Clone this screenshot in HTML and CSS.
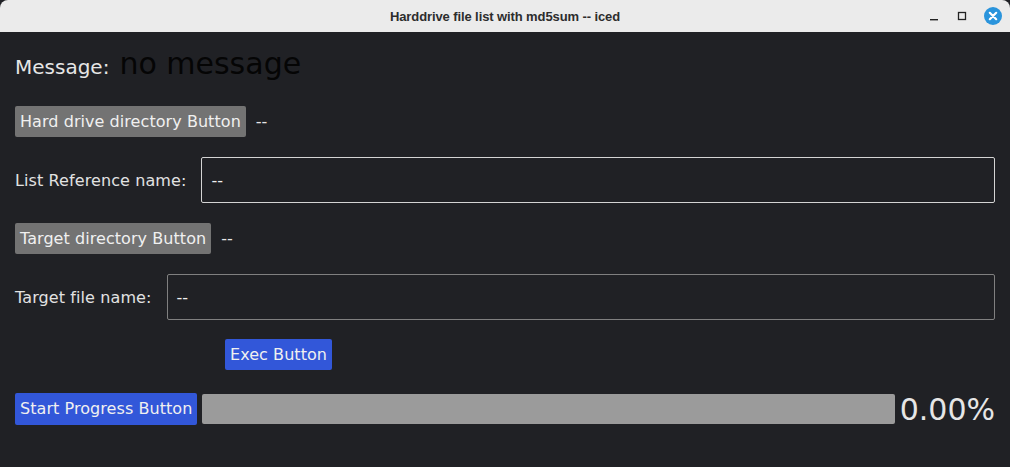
FILE: index.html
```html
<!DOCTYPE html>
<html>
<head>
<meta charset="utf-8">
<link rel="stylesheet" href="styles.css">
</head>
<body>
<div class="window">
  <div class="titlebar">
    <div class="title">Harddrive file list with md5sum -- iced</div>
    <div class="controls">
      <svg class="ctl" width="14" height="14" viewBox="0 0 14 14"><rect x="3" y="10" width="8" height="1.4" fill="#222"/></svg>
      <svg class="ctl" width="14" height="14" viewBox="0 0 14 14"><rect x="3.5" y="3.5" width="7" height="7" fill="none" stroke="#222" stroke-width="1.3"/></svg>
      <svg class="ctl close" width="20" height="20" viewBox="0 0 20 20"><circle cx="10" cy="10" r="9" fill="#2a94dc"/><path d="M6.8 6.8 L13.2 13.2 M13.2 6.8 L6.8 13.2" stroke="#fff" stroke-width="2.2" stroke-linecap="round"/></svg>
    </div>
  </div>
  <div class="content">
    <div class="row msg-row">
      <span class="msg-label">Message:</span>
      <span class="msg-text">no message</span>
    </div>
    <div class="row">
      <button class="btn secondary">Hard drive directory Button</button>
      <span class="value">--</span>
    </div>
    <div class="row">
      <span class="label">List Reference name:</span>
      <div class="input focused">--</div>
    </div>
    <div class="row">
      <button class="btn secondary">Target directory Button</button>
      <span class="value">--</span>
    </div>
    <div class="row">
      <span class="label">Target file name:</span>
      <div class="input">--</div>
    </div>
    <div class="row exec-row">
      <button class="btn primary">Exec Button</button>
    </div>
    <div class="row progress-row">
      <button class="btn primary">Start Progress Button</button>
      <div class="bar"></div>
      <span class="percent">0.00%</span>
    </div>
  </div>
</div>
</body>
</html>
```

FILE: styles.css
```css
html, body {
  margin: 0;
  padding: 0;
  background: #202125;
}
.window {
  width: 1010px;
  height: 467px;
  background: #202125;
  display: flex;
  flex-direction: column;
  font-family: "DejaVu Sans", sans-serif;
  color: #e6e6e6;
}
.titlebar {
  height: 32px;
  background: #ebebeb;
  border-radius: 8px 8px 0 0;
  position: relative;
  display: flex;
  align-items: center;
  justify-content: center;
}
.title {
  font-family: "Liberation Sans", sans-serif;
  font-weight: bold;
  font-size: 13px;
  color: #2d2d2d;
  letter-spacing: -0.1px;
}
.controls {
  position: absolute;
  right: 7px;
  top: 6px;
  display: flex;
  align-items: center;
  gap: 14px;
}
.ctl { display: block; }
.content {
  padding: 14px 15px 0 15px;
  display: flex;
  flex-direction: column;
  gap: 20px;
}
.row {
  display: flex;
  align-items: center;
}
.msg-row {
  height: 40px;
  align-items: baseline;
  gap: 10px;
}
.msg-label {
  font-size: 20px;
  color: #e6e6e6;
}
.msg-text {
  font-size: 30px;
  color: #050505;
}
.btn {
  font-family: "DejaVu Sans", sans-serif;
  font-size: 16px;
  line-height: 21px;
  padding: 5px 5px;
  border: none;
  border-radius: 2px;
  color: #f0f0f0;
  margin: 0;
  letter-spacing: 0.06px;
}
.secondary { background: #737373; }
.primary { background: #3257d9; }
.value {
  font-size: 16px;
  margin-left: 10px;
}
.label {
  font-size: 16px;
  margin-right: 15px;
  color: #e2e2e2;
  letter-spacing: 0.1px;
}
.input {
  flex: 1;
  box-sizing: border-box;
  height: 46px;
  border: 1px solid #808080;
  border-radius: 2px;
  padding: 0 9px;
  font-size: 16px;
  display: flex;
  align-items: center;
  color: #f0f0f0;
}
.input.focused { border-color: #d4d4d4; }
.exec-row {
  padding-left: 210px;
  margin-top: -1px;
  margin-bottom: 3px;
}
.progress-row { gap: 5px; }
.progress-row .btn { padding: 5px 5px 6px; }
.bar {
  flex: 1;
  height: 30px;
  background: #9b9b9b;
  border-radius: 2px;
}
.percent {
  font-size: 30px;
  color: #e6e6e6;
  line-height: 31px;
}
```
